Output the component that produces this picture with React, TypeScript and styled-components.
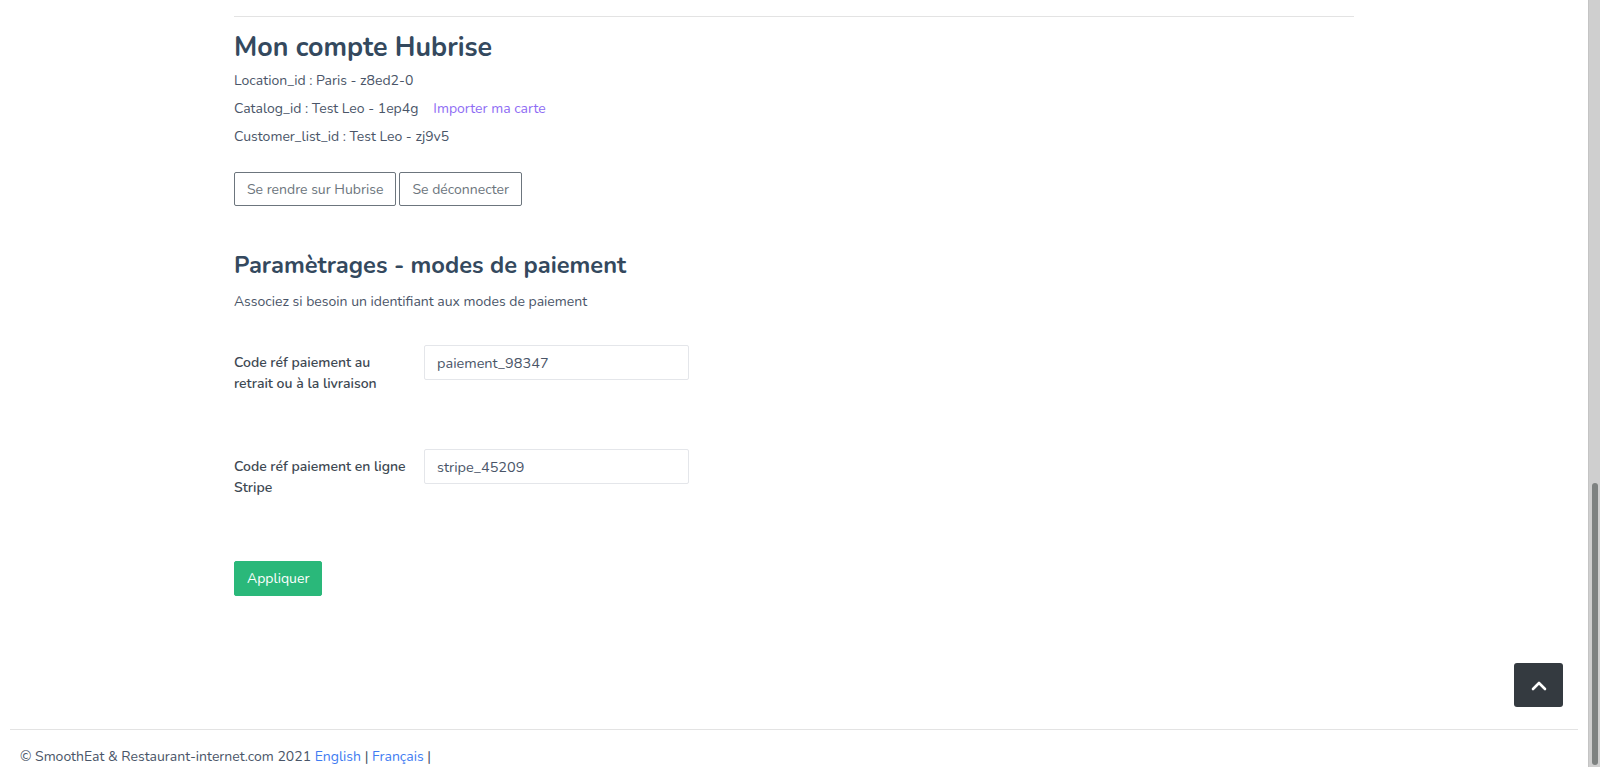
import styled, { createGlobalStyle } from 'styled-components';

const GlobalStyle = createGlobalStyle`
  html, body {
    margin: 0;
    padding: 0;
    height: 100%;
    overflow: hidden;
    background: #fff;
  }
  body {
    font-family: 'Nunito', 'Lato', 'Noto Sans', sans-serif;
    color: #4a5568;
  }
  * {
    box-sizing: border-box;
  }
`;

const paymentFields = [
  { label: 'Code réf paiement au retrait ou à la livraison', value: 'paiement_98347' },
  { label: 'Code réf paiement en ligne Stripe', value: 'stripe_45209' },
];

function App() {
  return (
    <>
      <GlobalStyle />
      <Page>
        <Main>
          <Container>
            <Divider />
            <Title>Mon compte Hubrise</Title>
            <InfoList>
              <InfoLine>Location_id : Paris - z8ed2-0</InfoLine>
              <InfoLine>
                Catalog_id : Test Leo - 1ep4g
                <ImportLink href="#">Importer ma carte</ImportLink>
              </InfoLine>
              <InfoLine>Customer_list_id : Test Leo - zj9v5</InfoLine>
            </InfoList>
            <ButtonRow>
              <OutlineButton>Se rendre sur Hubrise</OutlineButton>
              <OutlineButton>Se déconnecter</OutlineButton>
            </ButtonRow>

            <SectionTitle>Paramètrages - modes de paiement</SectionTitle>
            <Description>Associez si besoin un identifiant aux modes de paiement</Description>

            <Form>
              {paymentFields.map((field) => (
                <FormRow key={field.value}>
                  <FieldLabel>{field.label}</FieldLabel>
                  <TextInput defaultValue={field.value} />
                </FormRow>
              ))}
              <SubmitButton type="button">Appliquer</SubmitButton>
            </Form>
          </Container>

          <Footer>
            <FooterText>
              © SmoothEat &amp; Restaurant-internet.com 2021 <FooterLink href="#">English</FooterLink> |{' '}
              <FooterLink href="#">Français</FooterLink> |
            </FooterText>
          </Footer>
        </Main>

        <ScrollTrack>
          <ScrollThumb />
        </ScrollTrack>

        <BackToTop aria-label="Retour en haut">
          <svg width="16" height="11" viewBox="0 0 16 11" fill="none">
            <polyline
              points="2,9 8,3 14,9"
              stroke="#fff"
              strokeWidth="2.6"
              strokeLinecap="round"
              strokeLinejoin="round"
            />
          </svg>
        </BackToTop>
      </Page>
    </>
  );
}

const Page = styled.div`
  display: flex;
  width: 100%;
  height: 767px;
  overflow: hidden;
`;

const Main = styled.div`
  flex: 1;
  display: flex;
  flex-direction: column;
  min-width: 0;
`;

const Container = styled.div`
  width: 1120px;
  margin: 0 auto;
  padding-top: 16px;
  padding-bottom: 133px;
`;

const Divider = styled.hr`
  margin: 0;
  border: 0;
  border-top: 1px solid #e3e3e3;
`;

const Title = styled.h2`
  margin: 14px 0 0;
  font-size: 26.8px;
  line-height: 32px;
  font-weight: 700;
  color: #34495e;
`;

const SectionTitle = styled.h3`
  margin: 44px 0 0;
  font-size: 23.7px;
  line-height: 30px;
  font-weight: 700;
  color: #34495e;
`;

const InfoList = styled.div`
  margin-top: 4px;
  display: flex;
  flex-direction: column;
`;

const InfoLine = styled.p`
  margin: 0;
  font-size: 14px;
  line-height: 28px;
  color: #4a5568;
`;

const ImportLink = styled.a`
  margin-left: 15px;
  color: #8e6cf4;
  text-decoration: none;
`;

const ButtonRow = styled.div`
  display: flex;
  gap: 3px;
  margin-top: 21px;
`;

const OutlineButton = styled.button`
  height: 34px;
  padding: 0 12px;
  background: #fff;
  border: 1px solid #6c757d;
  border-radius: 2px;
  font-family: inherit;
  font-size: 14px;
  color: #6c757d;
  cursor: pointer;
`;

const Description = styled.p`
  margin: 12px 0 0;
  font-size: 14px;
  line-height: 20px;
  color: #4a5568;
`;

const Form = styled.form`
  margin-top: 33px;
  display: flex;
  flex-direction: column;
  align-items: flex-start;
`;

const FormRow = styled.div`
  display: grid;
  grid-template-columns: 190px 265px;
  align-items: start;
  height: 104px;
`;

const FieldLabel = styled.label`
  padding-top: 7px;
  padding-right: 15px;
  font-size: 14px;
  line-height: 21px;
  font-weight: 600;
  color: #3d4852;
`;

const TextInput = styled.input`
  width: 265px;
  height: 35px;
  padding: 0 12px;
  border: 1px solid #e4e6ea;
  border-radius: 2px;
  font-family: inherit;
  font-size: 14.5px;
  color: #4a5568;
  outline: none;
`;

const SubmitButton = styled.button`
  margin-top: 8px;
  height: 35px;
  padding: 0 12px;
  background: #2ab87a;
  border: 1px solid #2ab87a;
  border-radius: 2px;
  font-family: inherit;
  font-size: 14px;
  color: #fff;
  cursor: pointer;
`;

const Footer = styled.footer`
  padding: 0 10px;
`;

const FooterText = styled.div`
  border-top: 1px solid #e3e3e3;
  padding: 17px 10px 0;
  font-size: 14px;
  line-height: 20px;
  color: #4a5568;
`;

const FooterLink = styled.a`
  color: #3f7cf2;
  text-decoration: none;
`;

const ScrollTrack = styled.div`
  flex: 0 0 12px;
  height: 100%;
  background: #cfcfcf;
  border-left: 1px solid #c4c4c4;
  display: flex;
  flex-direction: column;
  align-items: center;
  padding-top: 483px;
`;

const ScrollThumb = styled.div`
  width: 6px;
  flex: 1;
  margin-bottom: 2px;
  border-radius: 3px;
  background: #7e8281;
`;

const BackToTop = styled.button`
  position: fixed;
  right: 37px;
  bottom: 60px;
  width: 49px;
  height: 44px;
  display: flex;
  align-items: center;
  justify-content: center;
  background: #343a40;
  border: 0;
  border-radius: 3px;
  cursor: pointer;
`;

export default App;
